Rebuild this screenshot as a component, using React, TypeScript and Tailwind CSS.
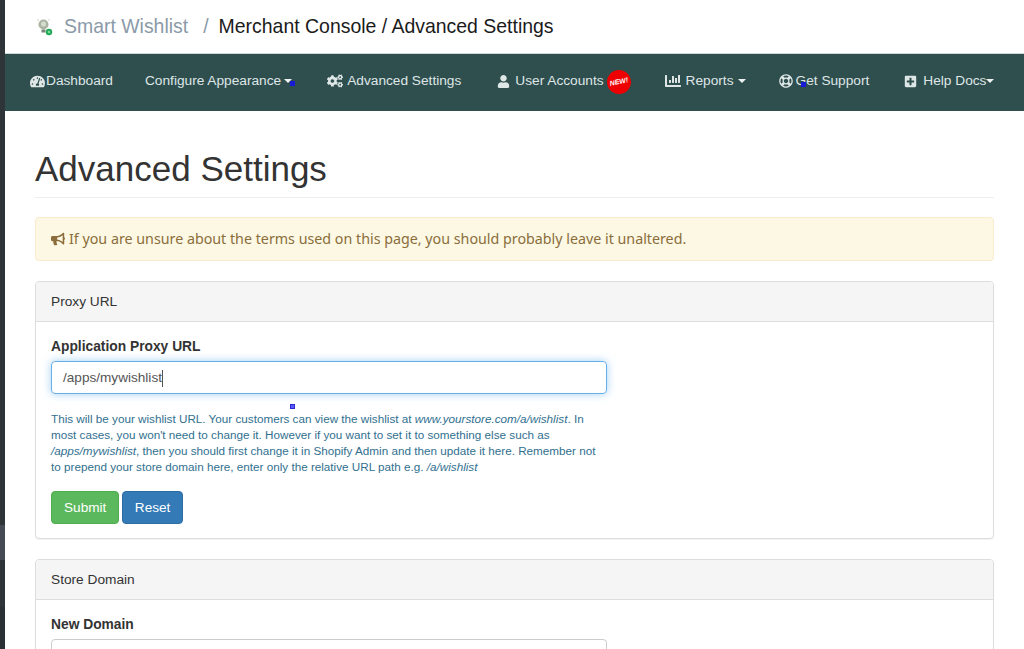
import { FaTachometerAlt, FaCogs, FaUser, FaChartBar, FaRegLifeRing, FaPlusSquare, FaBullhorn } from "react-icons/fa";
import { ReactNode } from "react";

function Caret({ className = "" }: { className?: string }) {
  return <span className={`inline-block w-0 h-0 border-x-[4px] border-x-transparent border-t-[4px] border-t-[#eef2f2] ${className}`} />;
}

function Marker({ className = "" }: { className?: string }) {
  return <span className={`absolute w-[5px] h-[5px] bg-[#1a1ad6] ${className}`} />;
}

function NavItem({ icon, children, className = "" }: { icon?: ReactNode; children: ReactNode; className?: string }) {
  return (
    <div className={`relative flex items-center text-[13.7px] text-[#dfe6e6] ${className}`}>
      {icon}
      {children}
    </div>
  );
}

function Logo() {
  return (
    <svg width="20" height="20" viewBox="0 0 20 20" className="mr-[9px]">
      <circle cx="8.5" cy="7.5" r="5" fill="#a9b5a2" />
      <circle cx="8.5" cy="7" r="2.5" fill="#d8dccf" />
      <rect x="6.5" y="12.5" width="4" height="3" fill="#7b8478" />
      <circle cx="3" cy="3" r="1" fill="#dfe3dc" />
      <circle cx="14" cy="3" r="1" fill="#dfe3dc" />
      <circle cx="14" cy="15" r="3.2" fill="#1fa855" />
      <circle cx="14" cy="15" r="1.3" fill="#7fdca0" />
    </svg>
  );
}

function Panel({ title, children }: { title: string; children: ReactNode }) {
  return (
    <section className="border border-[#dddddd] rounded-[4px] shadow-[0_1px_1px_rgba(0,0,0,0.05)] bg-white mb-5">
      <div className="h-[40px] flex items-center px-[15px] pt-px bg-[#f5f5f5] border-b border-[#dddddd] rounded-t-[3px] text-[13.7px] text-[#333333]">
        {title}
      </div>
      <div className="px-[15px] pt-[15px] pb-[14px]">{children}</div>
    </section>
  );
}

export default function App() {
  return (
    <div className="relative h-[649px] w-[1024px] overflow-hidden flex bg-white font-['Liberation_Sans',Arial,sans-serif] text-[#333333]">
      <div className="w-[5px] shrink-0 flex flex-col bg-[#2f3439]">
        <div className="h-[525px]" />
        <div className="h-[35px] bg-[#454b54]" />
        <div className="h-[47px]" />
        <div className="flex-1 bg-[#2b3035]" />
      </div>

      <div className="flex-1 min-w-0">
        <header className="h-[54px] flex items-center pl-[30px] text-[19.45px] border-b border-[#cfd8d8]">
          <Logo />
          <span className="text-[#8b9aa8]">Smart Wishlist</span>
          <span className="text-[#8b9aa8] ml-[15px] mr-[10px]">/</span>
          <span className="text-[#1b1b1b]">Merchant Console / Advanced Settings</span>
        </header>

        <nav className="h-[57px] bg-[#2f4f4f] flex items-center pl-[25px] pb-[2px]">
          <NavItem icon={<FaTachometerAlt className="w-[15px] h-[15px] mr-px" />}>Dashboard</NavItem>
          <NavItem className="ml-[32px]">
            Configure Appearance
            <Caret className="ml-[3px]" />
            <Marker className="left-[145px] top-[10px]" />
          </NavItem>
          <NavItem className="ml-[35px]" icon={<FaCogs className="w-[16px] h-[16px] mr-[4px]" />}>Advanced Settings</NavItem>
          <NavItem className="ml-[36px]" icon={<FaUser className="w-[13px] h-[13px] mr-[5px]" />}>
            User Accounts
            <span className="ml-[3px] w-[24px] h-[24px] rounded-full bg-[#ee0000] flex items-center justify-center text-white text-[7px] font-bold italic -rotate-12">
              NEW!
            </span>
          </NavItem>
          <NavItem className="ml-[34px]" icon={<FaChartBar className="w-[16px] h-[16px] mr-[5px]" />}>
            Reports
            <Caret className="ml-[4px]" />
          </NavItem>
          <NavItem className="ml-[33px]" icon={<FaRegLifeRing className="w-[14px] h-[14px] mr-[3px]" />}>
            Get Support
            <Marker className="left-[22px] top-[11px]" />
          </NavItem>
          <NavItem className="ml-[35px]" icon={<FaPlusSquare className="w-[13px] h-[13px] mr-[6px]" />}>
            Help Docs
            <Caret />
          </NavItem>
        </nav>

        <main className="px-[30px]">
          <h1 className="mt-[38px] text-[35px] leading-[40px] text-[#333333] pb-[8px] border-b border-[#eeeeee]">Advanced Settings</h1>

          <div className="mt-[19px] mb-5 h-[44px] flex items-center px-[15px] bg-[#fcf8e3] border border-[#faebcc] rounded-[4px] text-[#8a6d3b] text-[14.28px] font-['Noto_Sans',sans-serif]">
            <FaBullhorn className="w-[14px] h-[14px] mr-[4px]" />
            If you are unsure about the terms used on this page, you should probably leave it unaltered.
          </div>

          <Panel title="Proxy URL">
            <label className="block text-[13.8px] leading-[19px] font-bold mb-[5px]">Application Proxy URL</label>
            <div className="w-[556px] h-[33px] flex items-center px-[11px] pt-px border border-[#66afe9] rounded-[4px] text-[13.6px] text-[#555555] shadow-[0_0_8px_rgba(102,175,233,0.6)]">
              /apps/mywishlist
              <span className="w-px h-[17px] bg-[#555555]" />
            </div>
            <p className="relative w-[556px] mt-[17px] mb-[16px] text-[11.7px] leading-[16px] text-[#31708f]">
              <Marker className="left-[239px] top-[-7px] bg-[#5a5aff] border border-[#2a2ad0]" />
              This will be your wishlist URL. Your customers can view the wishlist at <em>www.yourstore.com/a/wishlist</em>. In most cases, you won't need to change it. However if you want to set it to something else such as <em>/apps/mywishlist</em>, then you should first change it in Shopify Admin and then update it here. Remember not to prepend your store domain here, enter only the relative URL path e.g. <em>/a/wishlist</em>
            </p>
            <div className="flex gap-[3px]">
              <button className="h-[33px] px-[12px] pt-px bg-[#5cb85c] border border-[#4cae4c] rounded-[4px] text-white text-[13.6px]">Submit</button>
              <button className="h-[33px] px-[11.5px] pt-px bg-[#337ab7] border border-[#2e6da4] rounded-[4px] text-white text-[13.6px]">Reset</button>
            </div>
          </Panel>

          <Panel title="Store Domain">
            <label className="block text-[13.8px] leading-[19px] font-bold mb-[5px]">New Domain</label>
            <div className="w-[556px] h-[33px] border border-[#cccccc] rounded-[4px]" />
          </Panel>
        </main>
      </div>
    </div>
  );
}
